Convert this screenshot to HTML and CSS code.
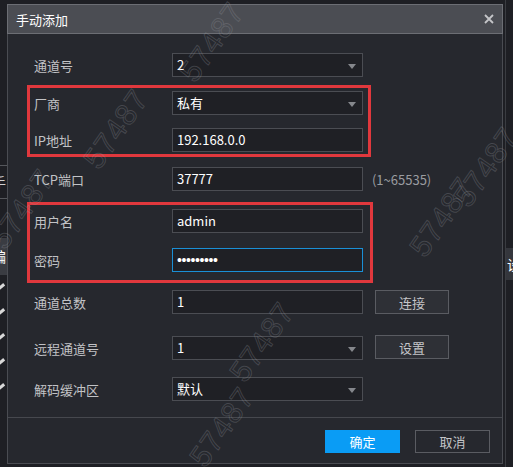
FILE: index.html
```html
<!DOCTYPE html>
<html lang="zh-CN">

<head>
    <meta charset="UTF-8">
    <meta name="viewport" content="width=device-width, initial-scale=1.0">
    <title>手动添加</title>
    <link rel="stylesheet" href="styles.css">
</head>

<body>

    <div class="page">

        <div class="side-left">
            <hr class="side-line first">
            <span class="side-char">手</span>
            <hr class="side-line">
            <div class="side-tab"><span class="side-char">编</span></div>
            <div class="pencils">
                <span class="pencil"></span>
                <span class="pencil"></span>
                <span class="pencil"></span>
                <span class="pencil"></span>
                <span class="pencil"></span>
            </div>
        </div>

        <div class="dialog">

            <div class="title-bar">
                <span class="title">手动添加</span>
                <svg class="close" width="10" height="10" viewBox="0 0 10 10">
                    <path d="M1 1 L9 9 M9 1 L1 9" stroke="#c4c5c8" stroke-width="1.8" fill="none" />
                </svg>
            </div>

            <div class="form">

                <div class="row r1">
                    <label>通道号</label>
                    <div class="field select">2<span class="arrow"></span></div>
                </div>

                <div class="group g1">
                    <div class="row">
                        <label>厂商</label>
                        <div class="field select">私有<span class="arrow"></span></div>
                    </div>
                    <div class="row r3">
                        <label>IP地址</label>
                        <div class="field">192.168.0.0</div>
                    </div>
                </div>

                <div class="row r4">
                    <label>TCP端口</label>
                    <div class="field">37777</div>
                    <span class="hint">(1~65535)</span>
                </div>

                <div class="group g2">
                    <div class="row">
                        <label>用户名</label>
                        <div class="field">admin</div>
                    </div>
                    <div class="row r6">
                        <label>密码</label>
                        <div class="field active"><span class="dots">•••••••••</span></div>
                    </div>
                </div>

                <div class="row r7">
                    <label>通道总数</label>
                    <div class="field">1</div>
                    <button class="btn">连接</button>
                </div>

                <div class="row r8">
                    <label>远程通道号</label>
                    <div class="field select">1<span class="arrow"></span></div>
                    <button class="btn">设置</button>
                </div>

                <div class="row r9">
                    <label>解码缓冲区</label>
                    <div class="field select">默认<span class="arrow"></span></div>
                </div>

            </div>

            <div class="footer">
                <button class="btn-ok">确定</button>
                <button class="btn-cancel">取消</button>
            </div>

        </div>

        <div class="side-right">
            <div class="side-tab right"><span class="side-char">设</span></div>
        </div>

    </div>

    <!-- watermark layer -->
    <div class="mark m1">57487</div>
    <div class="mark m2">57487</div>
    <div class="mark m3">57487</div>
    <div class="mark m4">57487</div>
    <div class="mark m5">57487</div>
    <div class="mark m6">57487</div>
    <div class="mark m7">57487</div>

</body>

</html>
```

FILE: styles.css
```css
* {
    margin: 0;
    padding: 0;
    box-sizing: border-box;
}

body {
    width: 513px;
    height: 467px;
    overflow: hidden;
    position: relative;
    background-color: #1e1f24;
    font-family: "Noto Sans CJK SC", "Noto Sans", sans-serif;
    font-size: 13px;
    color: #c2c3c6;
}

.page {
    display: flex;
    height: 467px;
}

/* app behind the dialog */
.side-left {
    width: 7px;
    overflow: hidden;
    display: flex;
    flex-direction: column;
}

.side-line {
    border: none;
    border-top: 1px solid #55575c;
    width: 7px;
}

.side-line.first {
    margin-top: 165px;
}

.side-char {
    display: block;
    font-size: 14px;
    line-height: 32px;
    color: #d0d0d0;
    margin-left: -8px;
}

.side-tab {
    margin-top: 39px;
    height: 37px;
    background-color: #3a3c42;
}

.side-tab .side-char {
    line-height: 37px;
    color: #ffffff;
}

.pencils {
    display: flex;
    flex-direction: column;
    gap: 22px;
    margin-top: 10px;
}

.pencil {
    display: block;
    width: 7px;
    height: 3px;
    background-color: #d8d8d8;
    transform: rotate(-40deg);
    margin-left: -2px;
}

.side-right {
    width: 8px;
    border-left: 1px solid #3a3c41;
    margin-left: 2px;
}

.side-tab.right {
    margin-top: 248px;
    height: 32px;
    background-color: #34363c;
}

.side-tab.right .side-char {
    line-height: 32px;
    margin-left: 1px;
}

/* dialog */
.dialog {
    width: 498px;
    height: 460px;
    margin-top: 4px;
    background-color: #26282e;
    border: 1px solid #4a4c52;
    display: flex;
    flex-direction: column;
}

.title-bar {
    height: 30px;
    background-color: #4b4d53;
    border: 1px solid #6c6e74;
    margin: -1px -1px 0 -1px;
    display: flex;
    align-items: center;
    justify-content: space-between;
    padding: 0 8px 0 8px;
}

.title {
    color: #ffffff;
    font-size: 13px;
}

.close {
    display: block;
}

.form {
    display: flex;
    flex-direction: column;
    align-items: flex-start;
    padding-left: 19px;
    height: 383px;
}

.row {
    display: flex;
    align-items: center;
    height: 24px;
    padding-left: 7px;
}

.row label {
    width: 138px;
}

.group .row {
    padding-left: 4px;
    padding-right: 5px;
}

.group {
    border: 3px solid #e0383d;
}

.r1 {
    margin-top: 19px;
}

.g1 {
    margin-top: 8px;
    padding: 3px 0 2px 0;
}

.r3 {
    margin-top: 13px;
}

.r4 {
    margin-top: 10px;
}

.g2 {
    margin-top: 11px;
    padding: 4px 0 8px 0;
}

.g2 .row {
    padding-right: 7px;
}

.r6 {
    margin-top: 15px;
}

.r7 {
    margin-top: 7px;
}

.r8 {
    margin-top: 22px;
}

.r9 {
    margin-top: 17px;
}

.field {
    width: 191px;
    height: 24px;
    background-color: #1f2025;
    border: 1px solid #4b4d53;
    color: #ffffff;
    font-size: 13px;
    line-height: 22px;
    padding-left: 4px;
    position: relative;
}

.field.active {
    border-color: #1a8fd6;
}

.dots {
    font-family: "Liberation Sans", sans-serif;
    font-size: 14px;
    letter-spacing: -0.4px;
}

.arrow {
    position: absolute;
    right: 6px;
    top: 10px;
    width: 0;
    height: 0;
    border-left: 4px solid transparent;
    border-right: 4px solid transparent;
    border-top: 5px solid #85878c;
}

.hint {
    margin-left: 9px;
    color: #9a9ca0;
}

.btn {
    width: 74px;
    height: 24px;
    margin-left: 12px;
    background-color: #2e3036;
    border: 1px solid #5a5c62;
    color: #c4c5c8;
    font-family: "Noto Sans CJK SC", "Noto Sans", sans-serif;
    font-size: 13px;
}

.r8 .btn {
    margin-top: -2px;
}

.footer {
    border-top: 1px solid #46484e;
    display: flex;
    justify-content: flex-end;
    gap: 15px;
    padding: 12px 12px 0 0;
    flex: 1;
}

.btn-ok,
.btn-cancel {
    width: 75px;
    height: 23px;
    font-family: "Noto Sans CJK SC", "Noto Sans", sans-serif;
    font-size: 13px;
}

.btn-ok {
    background-color: #0a9cf5;
    border: none;
    color: #ffffff;
}

.btn-cancel {
    background-color: #26282e;
    border: 1px solid #5a5c62;
    color: #c4c5c8;
}

/* watermarks */
.mark {
    position: absolute;
    font-family: "Liberation Sans", sans-serif;
    font-size: 30px;
    letter-spacing: 1px;
    color: transparent;
    -webkit-text-stroke: 1px rgba(150, 152, 158, 0.28);
    transform: rotate(-55deg);
    pointer-events: none;
}

.m1 { left: 72px; top: 112px; }
.m2 { left: 168px; top: 25px; }
.m3 { left: 218px; top: 325px; }
.m4 { left: 398px; top: 200px; }
.m5 { left: 442px; top: 150px; }
.m6 { left: 178px; top: 410px; }
.m7 { left: -22px; top: 192px; }
```
